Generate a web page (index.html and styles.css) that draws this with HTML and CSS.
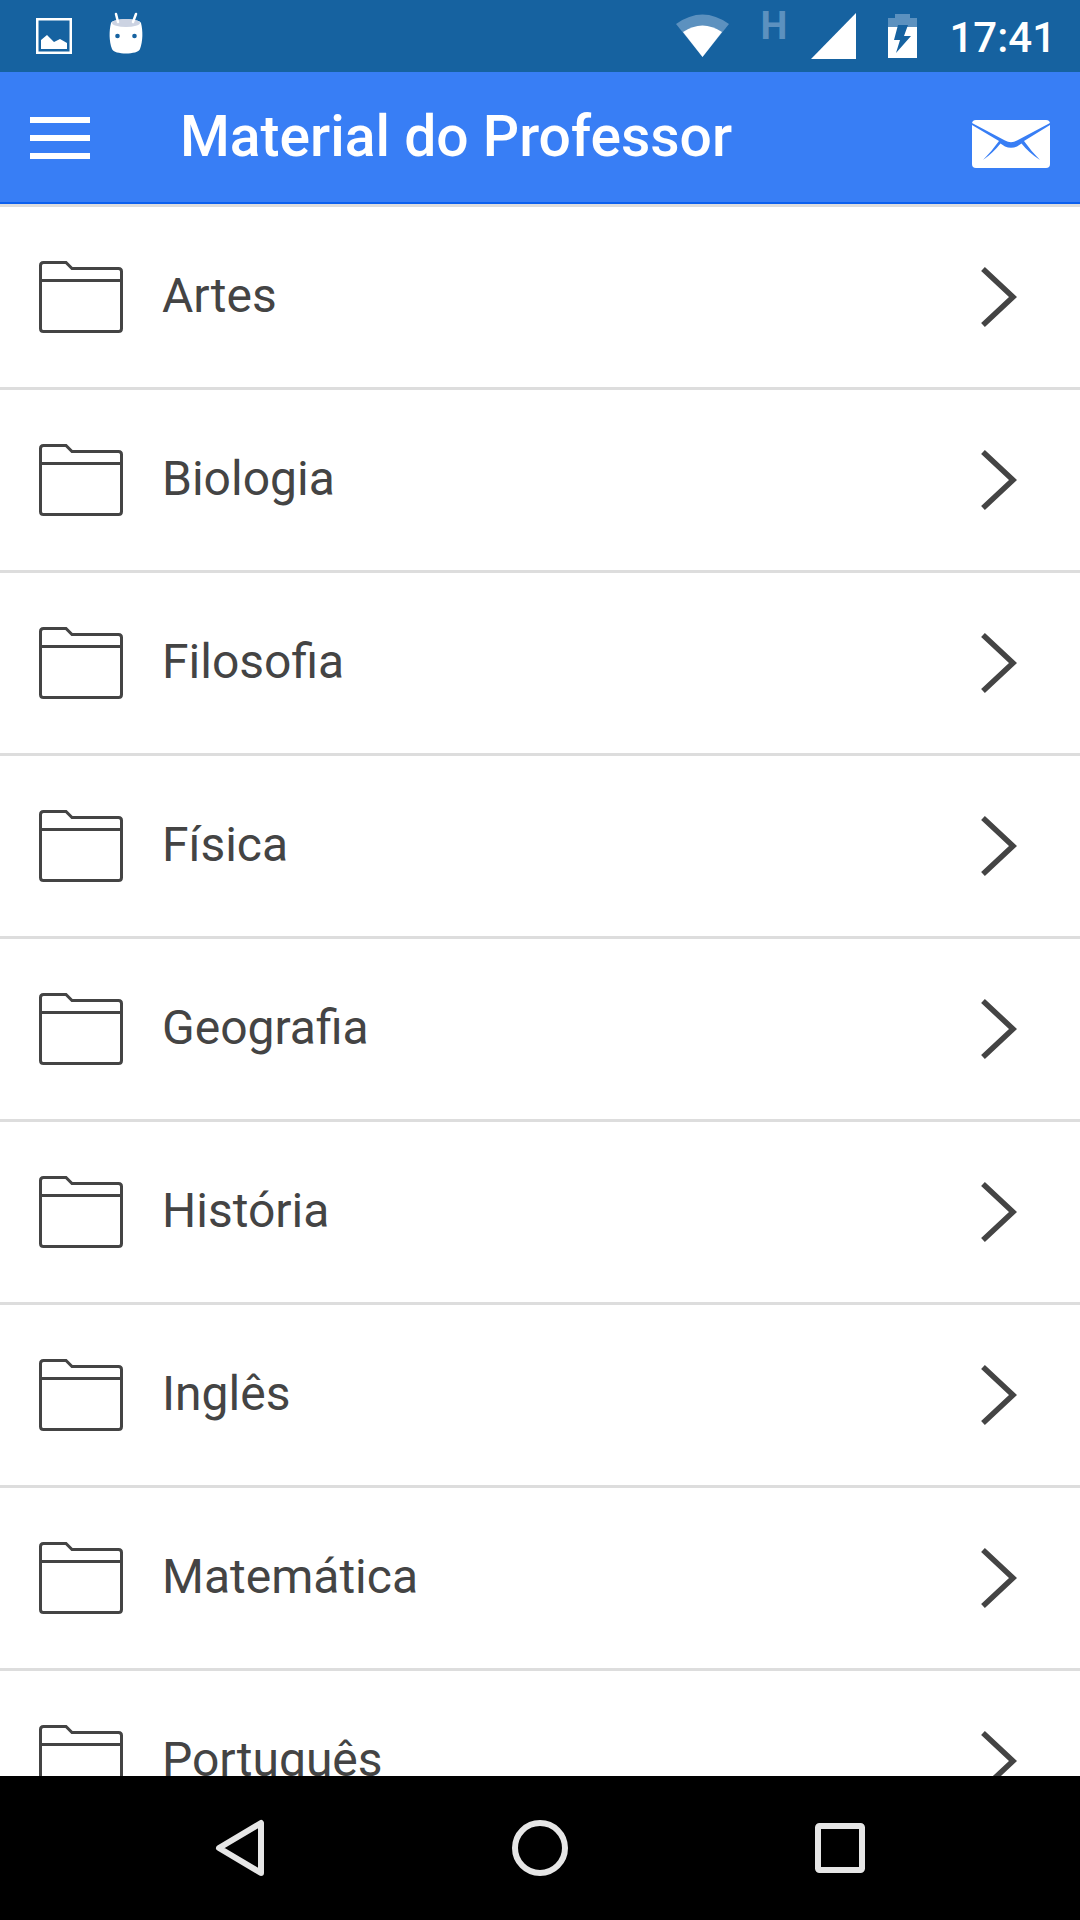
FILE: index.html
```html
<!DOCTYPE html>
<html lang="pt-BR">
<head>
    <meta charset="UTF-8">
    <meta name="viewport" content="width=device-width, initial-scale=1.0">
    <title>Material do Professor</title>
    <link rel="stylesheet" href="styles.css">
</head>
<body>
    <div class="status-bar">
        <div class="status-group">
            <svg width="36" height="36" viewBox="0 0 36 36">
                <rect x="1.250" y="1.250" width="33.500" height="33.500" fill="none" stroke="#fff" stroke-width="2.500"/>
                <path d="M5 31V22L11 17L18 24L24 21L31 25V31Z" fill="#fff"/>
            </svg>
            <svg width="34" height="48" viewBox="0 0 34 48">
                <path d="M2 11C0 19 0 29 3 37C5 43 29 43 31 37C34 29 34 19 32 11C30 6 4 6 2 11Z" fill="#fff"/>
                <ellipse cx="17" cy="11" rx="14" ry="4" fill="#ccd3e2"/>
                <path d="M7 2L9 10M27 2L24 10" stroke="#fff" stroke-width="2.500" stroke-linecap="round"/>
                <circle cx="8.500" cy="24" r="2.300" fill="#1662a0"/>
                <circle cx="25.500" cy="24" r="2.300" fill="#1662a0"/>
            </svg>
        </div>
        <div class="status-group status-right">
            <svg width="53" height="44" viewBox="0 0 53 44">
                <path d="M0 10Q26.500 -9 53 10L26.500 43Z" fill="#5c91bf"/>
                <path d="M7 18Q26.500 5 46 18L26.500 43Z" fill="#fff"/>
            </svg>
            <span class="network">H</span>
            <svg width="45" height="46" viewBox="0 0 45 46">
                <path d="M0 46L45 0V46Z" fill="#fff"/>
            </svg>
            <svg width="29" height="44" viewBox="0 0 29 44">
                <path d="M0 14V4H7V0H22V4H29V14Z" fill="#5c91bf"/>
                <path d="M0 13H29V44H0Z" fill="#fff"/>
                <path d="M10 11H20L16 22H23L8 39L12 26H6Z" fill="#1662a0"/>
            </svg>
            <span class="clock">17:41</span>
        </div>
    </div>

    <header class="header">
        <button class="header-button" aria-label="Menu">
            <svg width="60" height="44" viewBox="0 0 60 44">
                <path d="M0 5H60M0 23H60M0 41H60" stroke="#fff" stroke-width="6"/>
            </svg>
        </button>
        <h1 class="title">Material do Professor</h1>
        <button class="header-button" aria-label="Mensagens">
            <svg width="78" height="62" viewBox="0 0 78 62">
                <rect y="14" width="78" height="48" rx="4" fill="#fff"/>
                <path d="M0 17L33 34.500Q39 38 45 34.500L78 17V19L52 35Q59 45 68 54Q57 47 49.500 37.500L45 40.500Q39 43 33 40.500L28.500 37.500Q21 47 11 54Q20 45 27 35L0 19Z" fill="#387ef5"/>
            </svg>
        </button>
    </header>

    <main class="list" id="list"></main>

    <nav class="nav-bar">
        <button class="nav-button" aria-label="Voltar">
            <svg width="60" height="60" viewBox="0 0 60 60" fill="none" stroke="#e6e6e6" stroke-width="6" stroke-linejoin="round">
                <path d="M51 5V55L9 30Z"/>
            </svg>
        </button>
        <button class="nav-button" aria-label="Início">
            <svg width="60" height="60" viewBox="0 0 60 60" fill="none" stroke="#e6e6e6" stroke-width="6">
                <circle cx="30" cy="30" r="25"/>
            </svg>
        </button>
        <button class="nav-button" aria-label="Recentes">
            <svg width="60" height="60" viewBox="0 0 60 60" fill="none" stroke="#e6e6e6" stroke-width="6">
                <rect x="8" y="8" width="44" height="44" rx="1.500"/>
            </svg>
        </button>
    </nav>

    <script>
        const subjects = ["Artes", "Biologia", "Filosofia", "Física", "Geografia", "História", "Inglês", "Matemática", "Português"];
        document.getElementById("list").innerHTML = subjects.map(name => `
            <a class="item" href="#">
                <svg width="84" height="72" viewBox="0 0 84 72" fill="none" stroke="#444" stroke-width="3">
                    <path d="M1.500 4.500Q1.500 1.500 4.500 1.500H27L33 7.500H79.500Q82.500 7.500 82.500 10.500V67.500Q82.500 70.500 79.500 70.500H4.500Q1.500 70.500 1.500 67.500ZM1.500 19.500H82.500"/>
                </svg>
                <span class="item-name">${name}</span>
                <svg width="36" height="60" viewBox="0 0 36 60" fill="none" stroke="#444" stroke-width="5.500">
                    <path d="M2 2L32 30L2 58"/>
                </svg>
            </a>`).join("");
    </script>
</body>
</html>
```
FILE: styles.css
```css
* {
    box-sizing: border-box;
}
body {
    margin: 0;
    height: 100vh;
    display: flex;
    flex-direction: column;
    overflow: hidden;
    font-family: Roboto, sans-serif;
    background: #fff;
    color: #444;
}
svg {
    display: block;
    flex: none;
}
button {
    padding: 0;
    border: none;
    background: none;
    cursor: pointer;
}
.status-bar {
    flex: none;
    display: flex;
    align-items: center;
    justify-content: space-between;
    height: 72px;
    padding: 0 24px 0 36px;
    background: #1662a0;
    color: #fff;
}
.status-group {
    display: flex;
    align-items: center;
    gap: 37px;
}
.status-right {
    gap: 32px;
}
.network {
    align-self: flex-start;
    margin-right: -8px;
    font-size: 38px;
    line-height: 30px;
    font-weight: bold;
    color: #5c91bf;
}
.clock {
    padding-top: 2px;
    font-size: 42px;
    font-weight: 500;
}
.header {
    flex: none;
    display: flex;
    align-items: center;
    height: 132px;
    padding: 0 30px;
    background: #387ef5;
    border-bottom: 2px solid #0c60ee;
    color: #fff;
}
.title {
    flex: 1;
    margin: 0;
    padding: 0 0 2px 90px;
    font-size: 57px;
    font-weight: 500;
}
.list {
    flex: 1;
    min-height: 0;
    overflow: hidden;
}
.item {
    display: flex;
    align-items: center;
    height: 183px;
    padding: 0 63px 0 39px;
    border-top: 3px solid #ddd;
    color: #444;
    text-decoration: none;
}
.item-name {
    flex: 1;
    padding: 0 39px 2px;
    font-size: 48px;
    line-height: 60px;
}
.nav-bar {
    flex: none;
    display: flex;
    justify-content: center;
    height: 144px;
    padding: 0 90px;
    background: #000;
}
.nav-button {
    flex: 1;
    display: flex;
    align-items: center;
    justify-content: center;
}
```
